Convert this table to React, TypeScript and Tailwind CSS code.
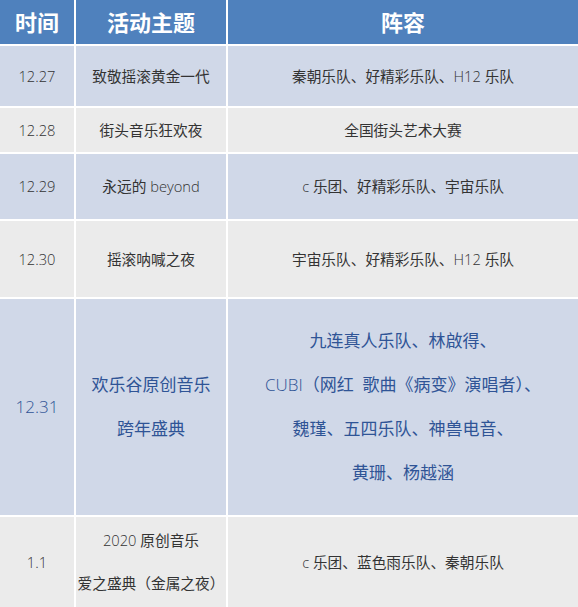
const font = {
  fontFamily: '"Open Sans", "Noto Sans CJK SC", sans-serif',
};

type Row = {
  date: string;
  theme: string[];
  lineup: string[];
  featured?: boolean;
};

const rows: Row[] = [
  { date: "12.27", theme: ["致敬摇滚黄金一代"], lineup: ["秦朝乐队、好精彩乐队、H12 乐队"] },
  { date: "12.28", theme: ["街头音乐狂欢夜"], lineup: ["全国街头艺术大赛"] },
  { date: "12.29", theme: ["永远的 beyond"], lineup: ["c 乐团、好精彩乐队、宇宙乐队"] },
  { date: "12.30", theme: ["摇滚呐喊之夜"], lineup: ["宇宙乐队、好精彩乐队、H12 乐队"] },
  {
    date: "12.31",
    theme: ["欢乐谷原创音乐", "跨年盛典"],
    lineup: ["九连真人乐队、林啟得、", "CUBI（网红  歌曲《病变》演唱者）、", "魏瑾、五四乐队、神兽电音、", "黄珊、杨越涵"],
    featured: true,
  },
  { date: "1.1", theme: ["2020 原创音乐", "爱之盛典（金属之夜）"], lineup: ["c 乐团、蓝色雨乐队、秦朝乐队"] },
];

// latin runs render thinner than the CJK text in the original
function Mixed({ text }: { text: string }) {
  const parts = text.split(/([A-Za-z0-9.]+)/);
  return (
    <>
      {parts.map((p, i) =>
        /^[A-Za-z0-9.]+$/.test(p) ? (
          <span key={i} className="font-light">
            {p}
          </span>
        ) : (
          p
        ),
      )}
    </>
  );
}

function Cell({ lines, bg, featured }: { lines: string[]; bg: string; featured?: boolean }) {
  return (
    <div
      className={`flex flex-col items-center justify-center whitespace-pre text-center ${bg} ${
        featured ? "text-[17px] leading-[44px] text-[#2f5496]" : "text-[14.7px] leading-[43px] text-[#333333]"
      }`}
    >
      {lines.map((l) => (
        <div key={l}>
          <Mixed text={l} />
        </div>
      ))}
    </div>
  );
}

export default function App() {
  return (
    <div
      style={font}
      className="grid h-[607px] w-[578px] grid-cols-[74px_150px_1fr] grid-rows-[44px_60px_44px_65px_76px_216px_90px] gap-[2px] bg-white"
    >
      {["时间", "活动主题", "阵容"].map((h) => (
        <div key={h} className="flex items-center justify-center bg-[#4f81bd] text-[22px] font-bold text-white">
          {h}
        </div>
      ))}
      {rows.map((r, i) => {
        const bg = i % 2 === 0 ? "bg-[#d0d8e8]" : "bg-[#ebebeb]";
        return [
          <Cell key={r.date + "d"} lines={[r.date]} bg={bg} featured={r.featured} />,
          <Cell key={r.date + "t"} lines={r.theme} bg={bg} featured={r.featured} />,
          <Cell key={r.date + "l"} lines={r.lineup} bg={bg} featured={r.featured} />,
        ];
      })}
    </div>
  );
}
